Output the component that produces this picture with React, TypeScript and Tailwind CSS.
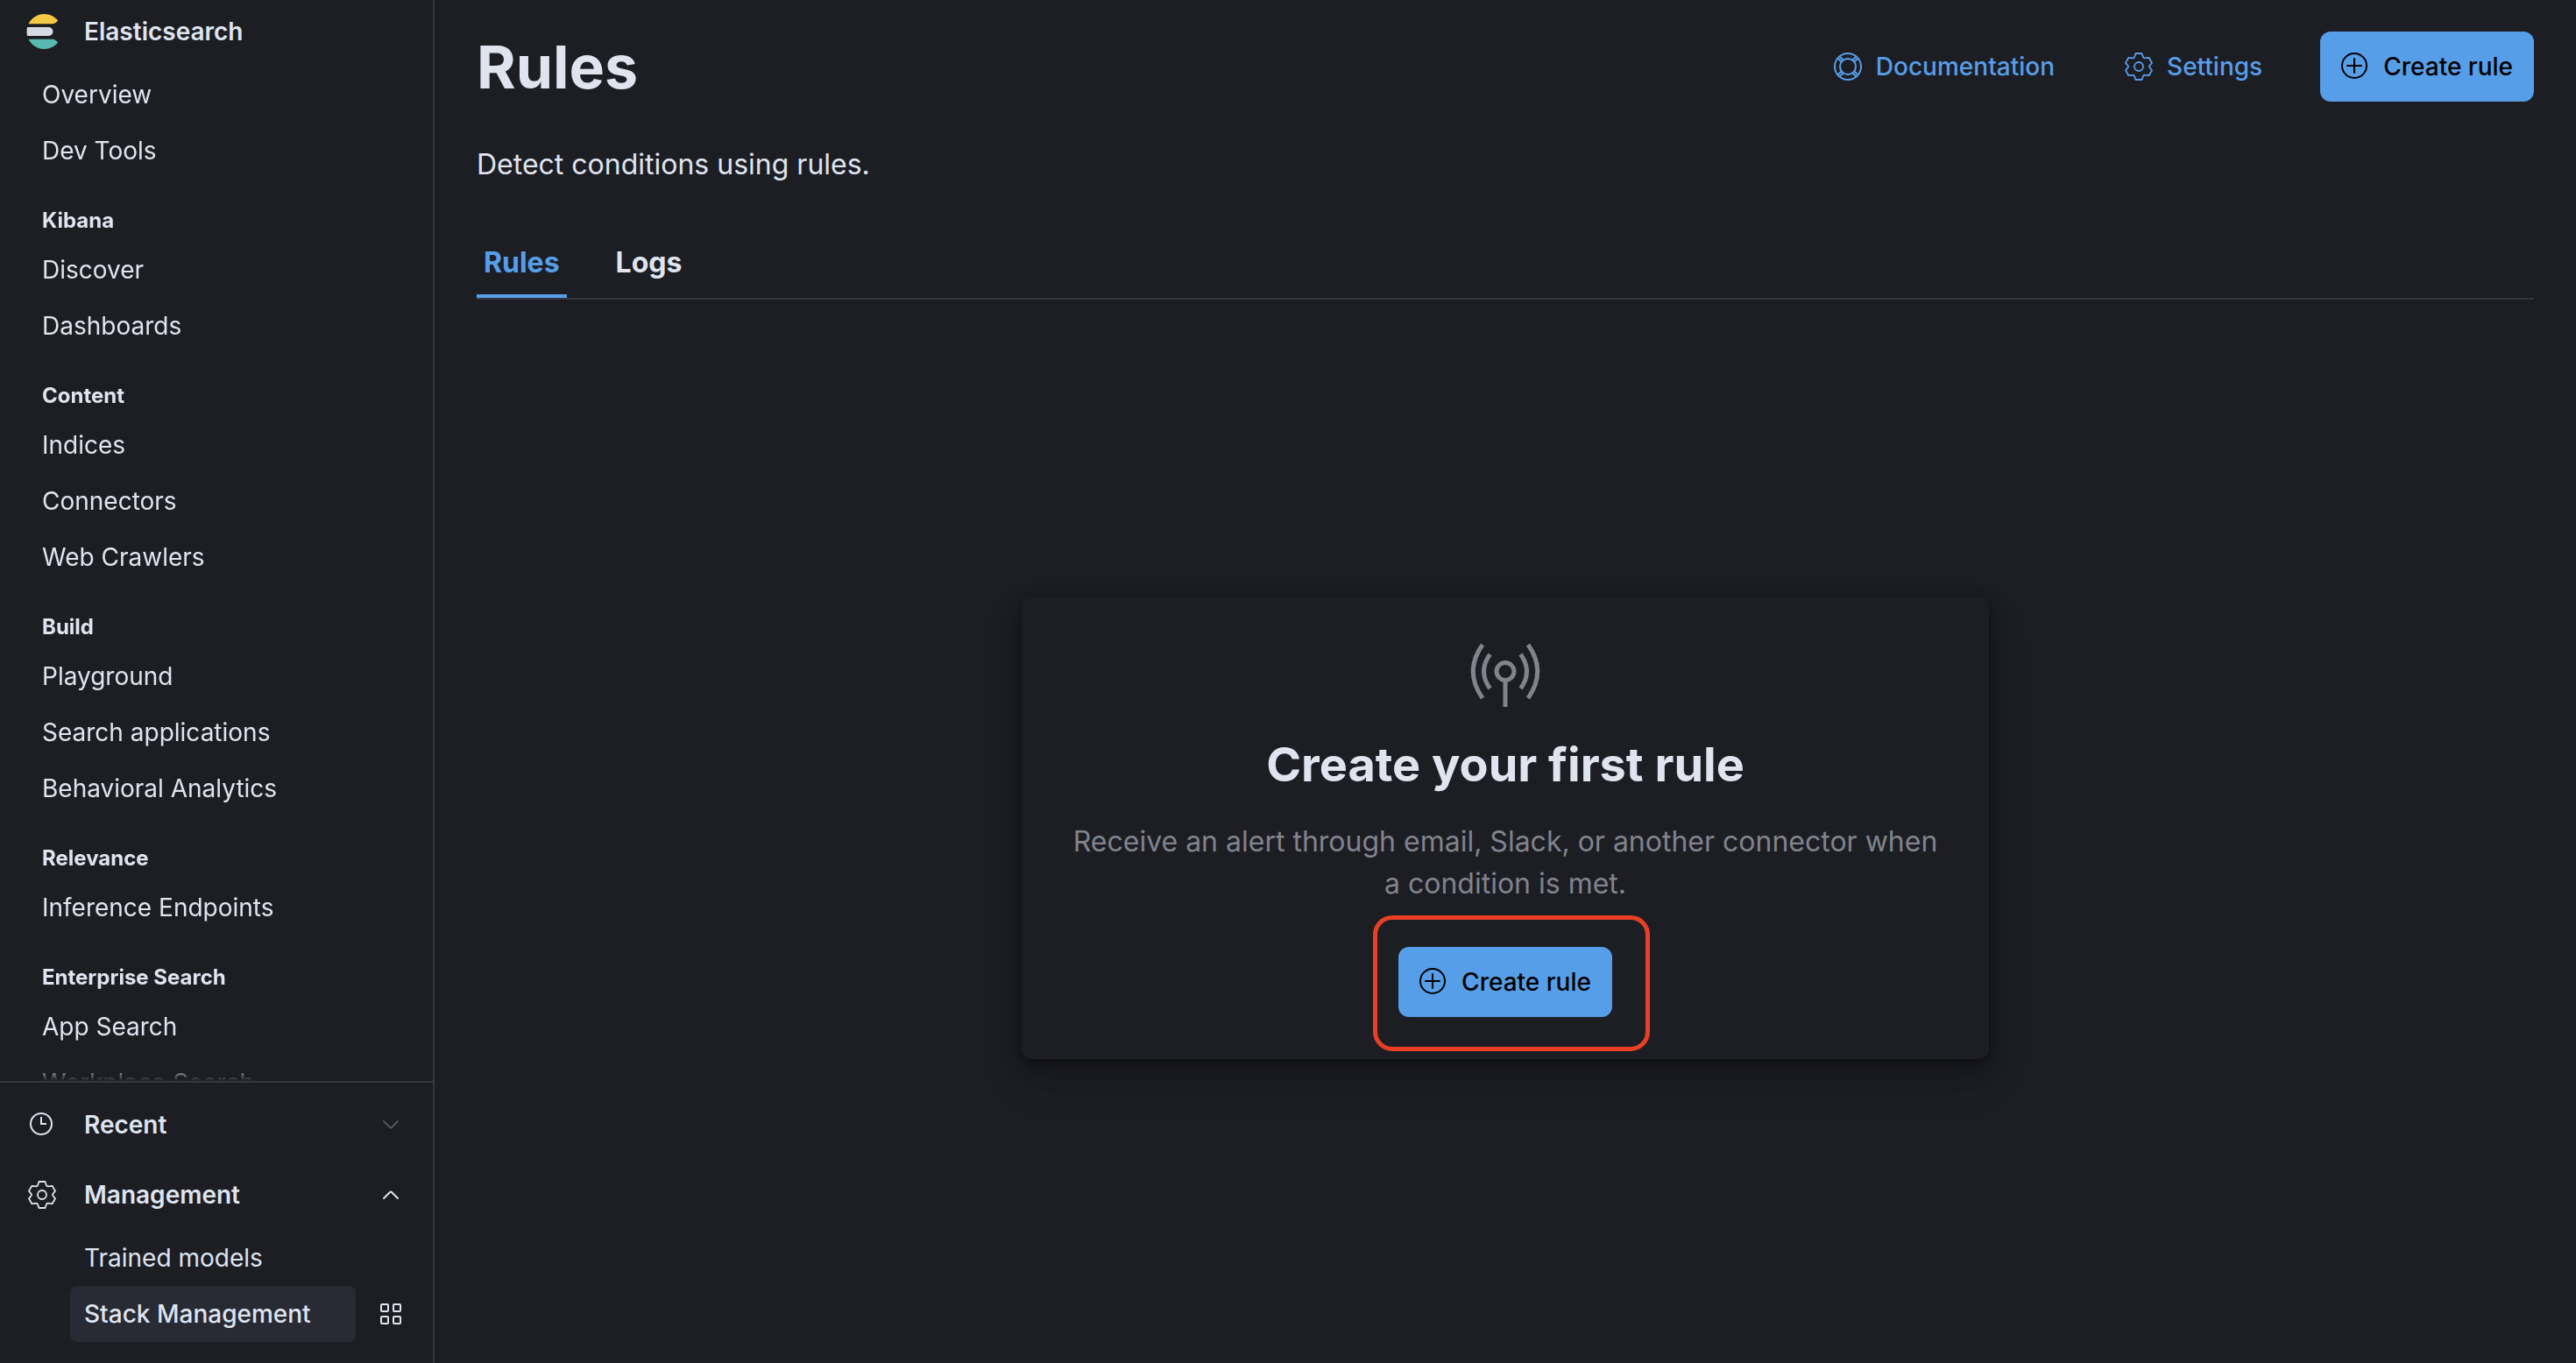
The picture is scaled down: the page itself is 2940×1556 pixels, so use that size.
import React from "react";

type Section = { title?: string; items: string[] };

const sections: Section[] = [
  { items: ["Overview", "Dev Tools"] },
  { title: "Kibana", items: ["Discover", "Dashboards"] },
  { title: "Content", items: ["Indices", "Connectors", "Web Crawlers"] },
  { title: "Build", items: ["Playground", "Search applications", "Behavioral Analytics"] },
  { title: "Relevance", items: ["Inference Endpoints"] },
  { title: "Enterprise Search", items: ["App Search", "Workplace Search"] },
];

function ElasticLogo() {
  return (
    <svg className="size-10 shrink-0" viewBox="0 0 32 32" aria-hidden="true">
      <path fill="#D6DAE5" d="M2 16c0 1.384.194 2.72.524 4H22a4 4 0 0 0 0-8H2.524A15.984 15.984 0 0 0 2 16" />
      <path fill="#F4C945" d="M28.924 7.662A15.381 15.381 0 0 0 30.48 6C27.547 2.346 23.05 0 18 0 11.679 0 6.239 3.678 3.644 9H25.51a5.039 5.039 0 0 0 3.413-1.338" />
      <path fill="#57BAB2" d="M25.51 23H3.645C6.24 28.323 11.679 32 18 32c5.05 0 9.547-2.346 12.48-6a15.381 15.381 0 0 0-1.556-1.662A5.034 5.034 0 0 0 25.51 23" />
    </svg>
  );
}

function GearIcon() {
  return (
    <svg className="size-8 shrink-0" viewBox="0 0 32 32" fill="none" stroke="currentColor" strokeWidth="1.8" strokeLinejoin="round" aria-hidden="true">
      <path d="M12.5 1H19.5L21 5.2Q21.4 6.2 22.4 6.3L27.6 5.8L31 11.6L28.2 15.2Q27.7 16 28.2 16.8L31 20.4L27.6 26.2L22.4 25.700Q21.4 25.8 21 26.8L19.5 31H12.5L11 26.8Q10.600 25.8 9.600 25.700L4.400 26.2L1 20.4L3.800 16.8Q4.300 16 3.800 15.2L1 11.6L4.400 5.8L9.600 6.3Q10.600 6.2 11 5.2Z" />
      <circle cx="16" cy="16" r="5" />
    </svg>
  );
}

function HelpIcon() {
  return (
    <svg className="size-8 shrink-0" viewBox="0 0 32 32" fill="none" stroke="currentColor" strokeWidth="2" aria-hidden="true">
      <circle cx="16" cy="16" r="15" />
      <circle cx="16" cy="16" r="9" />
      <path d="M4.5 6.5 9 11M6.5 4.5 11 9M27.5 6.5 23 11M25.5 4.5 21 9M4.5 25.5 9 21M6.5 27.5 11 23M27.5 25.5 23 21M25.5 27.5 21 23" />
    </svg>
  );
}

function PlusCircleIcon() {
  return (
    <svg className="size-8 shrink-0" viewBox="0 0 32 32" fill="none" stroke="currentColor" strokeWidth="2" aria-hidden="true">
      <circle cx="15" cy="15" r="14" />
      <path d="M15 7v16M7 15h16" strokeLinecap="round" />
    </svg>
  );
}

function ClockIcon() {
  return (
    <svg className="size-8 shrink-0" viewBox="0 0 32 32" fill="none" stroke="currentColor" strokeWidth="2" aria-hidden="true">
      <circle cx="15" cy="15" r="12" />
      <path d="M15 7v8h6" />
    </svg>
  );
}

function Chevron({ up = false }: { up?: boolean }) {
  return (
    <svg className={up ? "size-8 shrink-0" : "size-8 shrink-0 text-[#51555f]"} viewBox="0 0 32 32" fill="none" stroke="currentColor" strokeWidth="2" strokeLinecap="round" strokeLinejoin="round" aria-hidden="true">
      <path d={up ? "M8 20 15 13Q16 12 17 13L24 20" : "M8 12 15 19Q16 20 17 19L24 12"} />
    </svg>
  );
}

function GridIcon() {
  return (
    <svg className="size-8" viewBox="0 0 32 32" fill="none" stroke="currentColor" strokeWidth="2" aria-hidden="true">
      <rect x="5" y="5" width="8" height="8" rx="1" />
      <rect x="19" y="5" width="8" height="8" rx="1" />
      <rect x="5" y="19" width="8" height="8" rx="1" />
      <rect x="19" y="19" width="8" height="8" rx="1" />
    </svg>
  );
}

function AntennaIcon() {
  return (
    <svg className="size-20" viewBox="0 0 80 80" fill="none" stroke="currentColor" strokeWidth="5" aria-hidden="true">
      <circle cx="40" cy="37.5" r="10" />
      <path d="M40 47.5V78M22.5 18Q8.5 37.5 22.5 57M57.5 18Q71.5 37.5 57.5 57M14 7Q-7.5 37.5 14 68M66 7Q87.5 37.5 66 68" />
    </svg>
  );
}

function CreateRuleButton() {
  return (
    <button type="button" className="flex h-20 items-center gap-4 rounded-xl bg-[#579EE9] px-6 text-[28px] font-medium text-black">
      <PlusCircleIcon />
      Create rule
    </button>
  );
}

function NavLink({ label }: { label: string }) {
  return (
    <a href="#" className="flex h-16 shrink-0 items-center px-12 text-[28px]">
      {label}
    </a>
  );
}

function Sidebar() {
  return (
    <aside className="flex h-screen w-[496px] shrink-0 flex-col border-r-2 border-[#343741]">
      <a href="#" className="mb-1 flex h-[72px] shrink-0 items-center gap-7 pl-7 text-[28px] font-semibold">
        <ElasticLogo />
        Elasticsearch
      </a>
      <nav className="flex min-h-0 flex-1 flex-col overflow-hidden [mask-image:linear-gradient(to_top,transparent_0,black_18px)]">
        {sections.map((section, i) => (
          <div key={i} className="flex shrink-0 flex-col">
            {section.title && (
              <h2 className="px-12 pt-8 pb-2 text-[24px] leading-[32px] font-bold">{section.title}</h2>
            )}
            {section.items.map((item) => (
              <NavLink key={item} label={item} />
            ))}
          </div>
        ))}
      </nav>
      <div className="flex shrink-0 flex-col border-t-2 border-[#343741] pt-2 pb-6 text-[28px]">
        <button type="button" className="flex h-20 items-center px-8 font-semibold">
          <ClockIcon />
          <span className="flex-1 pl-8 text-left">Recent</span>
          <Chevron />
        </button>
        <button type="button" className="flex h-20 items-center px-8 font-semibold">
          <GearIcon />
          <span className="flex-1 pl-8 text-left">Management</span>
          <Chevron up />
        </button>
        <a href="#" className="flex h-16 items-center pl-24">
          Trained models
        </a>
        <div className="flex items-center justify-between pr-8 pl-20">
          <a href="#" className="flex h-16 w-[326px] items-center rounded-lg bg-[#282B33] px-4 font-medium">
            Stack Management
          </a>
          <button type="button" aria-label="Open panel">
            <GridIcon />
          </button>
        </div>
      </div>
    </aside>
  );
}

export default function App() {
  return (
    <div className="flex min-h-screen bg-[#1D1E24] font-['Inter',sans-serif] text-[#DFE4EF]">
      <Sidebar />
      <main className="flex min-w-0 flex-1 flex-col px-12 pt-9">
        <header className="flex items-center justify-between">
          <h1 className="text-[68px] leading-[80px] font-bold">Rules</h1>
          <div className="flex items-center text-[28px] font-medium text-[#579EE9]">
            <a href="#" className="mr-20 flex items-center gap-4">
              <HelpIcon />
              Documentation
            </a>
            <a href="#" className="mr-[66px] flex items-center gap-4">
              <GearIcon />
              Settings
            </a>
            <CreateRuleButton />
          </div>
        </header>
        <p className="mt-12 text-[32px] leading-[48px]">Detect conditions using rules.</p>
        <div role="tablist" className="mt-12 flex h-[82px] gap-12 border-b-2 border-[#343741] text-[32px] font-bold">
          <button type="button" role="tab" aria-selected="true" className="border-b-4 border-[#579EE9] px-2 pt-1 text-[#579EE9]">
            Rules
          </button>
          <button type="button" role="tab" aria-selected="false" className="border-b-4 border-transparent px-2 pt-1">
            Logs
          </button>
        </div>
        <div className="flex flex-1 items-center justify-center pb-2">
          <section className="flex w-full max-w-[1104px] flex-col items-center rounded-xl p-12 text-center text-[#81838D] shadow-[0_2px_8px_rgba(0,0,0,0.3),0_11px_24px_rgba(0,0,0,0.22),0_24px_48px_rgba(0,0,0,0.15)]">
            <AntennaIcon />
            <h2 className="mt-8 text-[54px] leading-[64px] font-bold text-[#DFE4EF]">Create your first rule</h2>
            <p className="mt-8 text-[32px] leading-[48px]">
              Receive an alert through email, Slack, or another connector when a condition is met.
            </p>
            <div className="relative mt-12">
              <CreateRuleButton />
              <div className="pointer-events-none absolute -top-9 -right-[43px] -bottom-[39px] -left-[29px] rounded-[22px] border-5 border-[#EA3F25]" />
            </div>
          </section>
        </div>
      </main>
    </div>
  );
}
